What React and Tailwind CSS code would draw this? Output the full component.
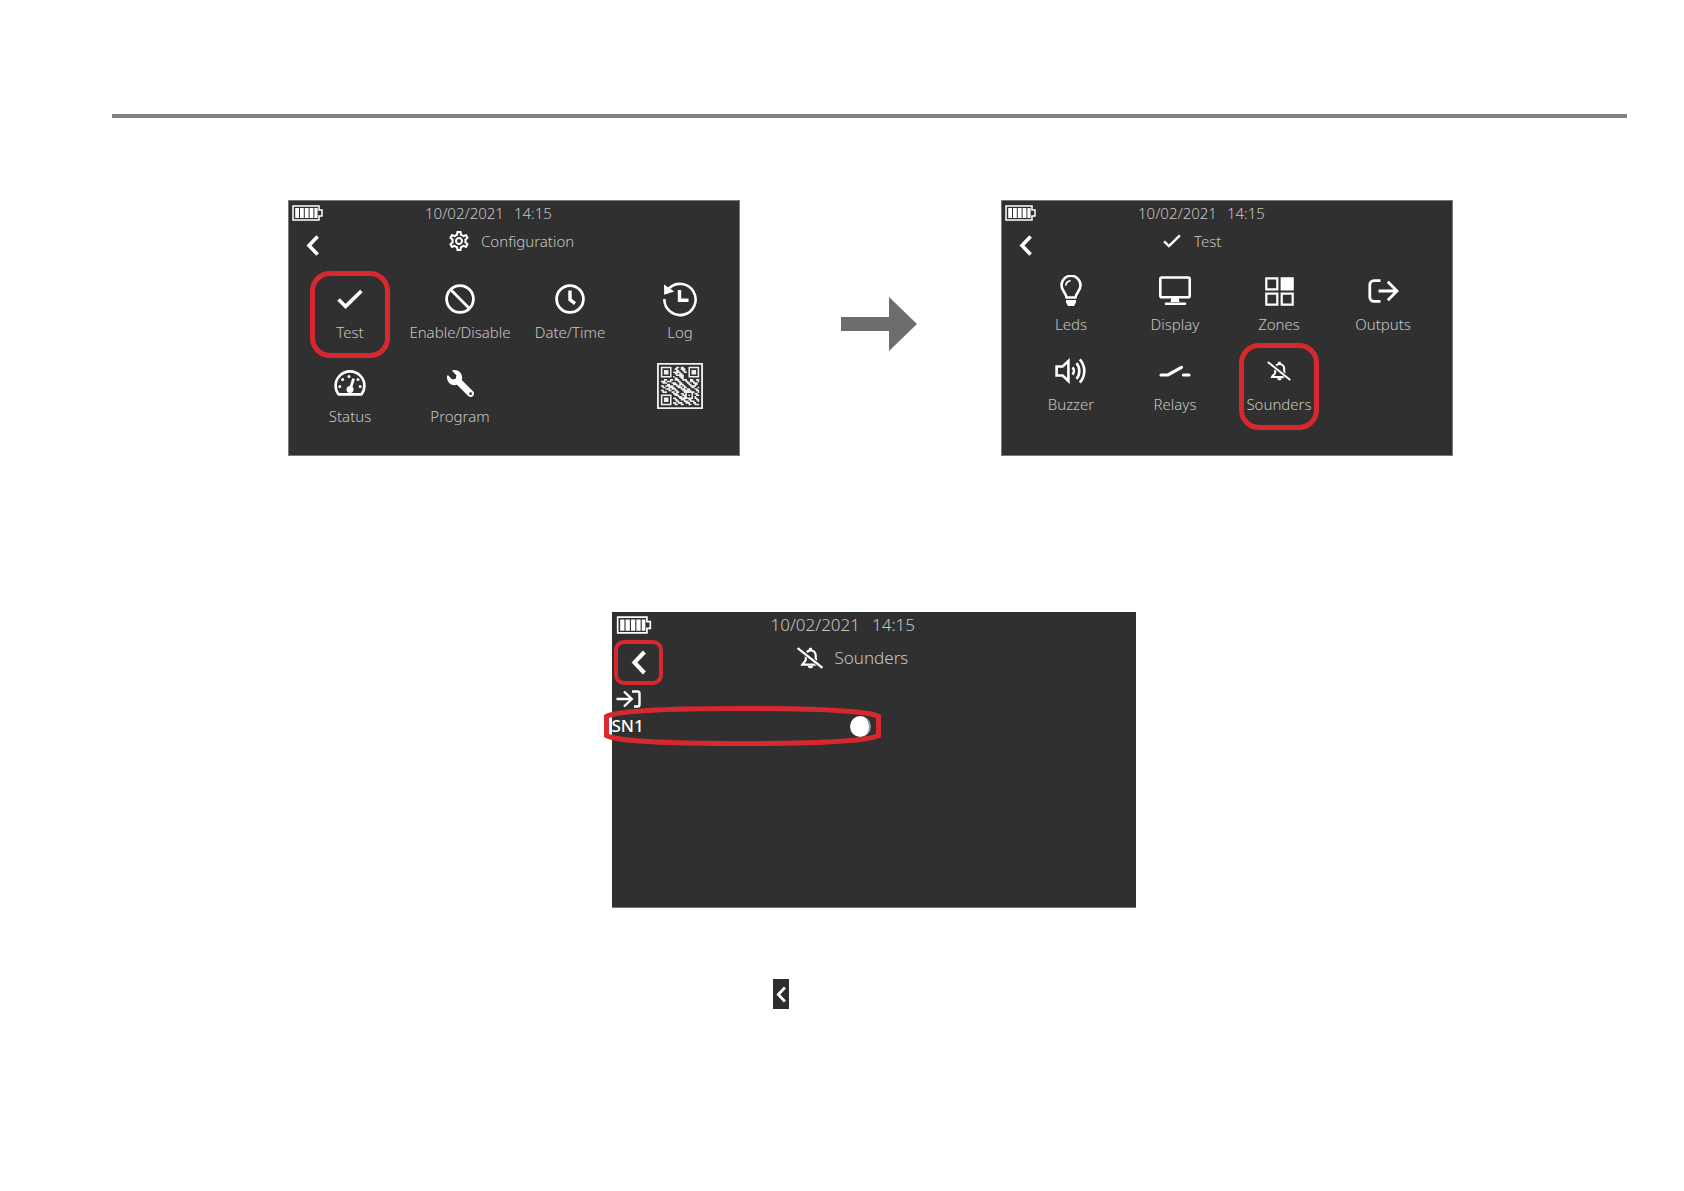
import { useState } from "react";
import clsx from "clsx";
import { FaWrench } from "react-icons/fa";
import { MdOutlineSettings } from "react-icons/md";

const BatteryIcon = ({ className }) => (
  <svg viewBox="0 0 31 16" className={className}>
    <path d="M1 1h26v4h3v6h-3v4H1z" fill="#303030" stroke="#fff" strokeWidth="1.5" />
    <path d="M3.2 3h3.8v10H3.2zM8 3h3.8v10H8zM12.8 3h3.8v10h-3.8zM17.6 3h3.8v10h-3.8zM22.4 3h3.2v10h-3.2z" fill="#fff" />
  </svg>
);

const ChevronIcon = ({ className }) => (
  <svg viewBox="0 0 13 21" fill="none" stroke="#fff" strokeWidth="3.6" className={className}>
    <path d="M11.6 1.4 3 10.5l8.6 9.1" />
  </svg>
);

const CheckIcon = ({ className }) => (
  <svg viewBox="0 0 26 20" fill="none" stroke="#fff" strokeWidth="3.6" className={className}>
    <path d="m1.6 10.4 7 7L24.4 2" />
  </svg>
);

const DisableIcon = () => (
  <svg viewBox="0 0 30 30" fill="none" stroke="#fff" strokeWidth="2.8" className="size-[30px]">
    <circle cx="15" cy="15" r="13.4" />
    <path d="m5.6 5.6 18.8 18.8" />
  </svg>
);

const ClockIcon = () => (
  <svg viewBox="0 0 30 30" fill="none" stroke="#fff" strokeWidth="2.8" className="size-[30px]">
    <circle cx="15" cy="15" r="13.4" />
    <path d="M15 6.5v9.2l5 4" strokeWidth="3.4" />
  </svg>
);

const LogIcon = () => (
  <svg viewBox="0 0 36 36" fill="none" stroke="#fff" strokeWidth="2.6" className="size-9">
    <path d="M2.4 18A15.6 15.6 0 1 0 7 7.4" />
    <path d="m2 3.5.2 10.2 10-3.2z" fill="#fff" stroke="none" />
    <path d="M17.5 9v10.2h9" strokeWidth="3.4" />
  </svg>
);

const GaugeIcon = () => (
  <svg viewBox="0 0 32 26" fill="none" stroke="#fff" className="h-[26px] w-8">
    <path d="M4.6 24.4C2.6 22 1.6 19 1.6 15.8a14.4 14.4 0 0 1 28.8 0c0 3.2-1 6.2-3 8.6z" strokeWidth="2.6" strokeLinejoin="round" />
    <path d="m19.6 8.6-3.2 10" strokeWidth="2.8" />
    <circle cx="16" cy="19.6" r="3.5" fill="#fff" stroke="none" />
    <g fill="#fff" stroke="none">
      <circle cx="5.8" cy="16.4" r="1.5" />
      <circle cx="8.6" cy="9.6" r="1.5" />
      <circle cx="15" cy="6.4" r="1.5" />
      <circle cx="24" cy="9.6" r="1.5" />
      <circle cx="26.2" cy="16.4" r="1.5" />
    </g>
  </svg>
);

const BulbIcon = () => (
  <svg viewBox="0 0 22 32" fill="none" stroke="#fff" className="h-8 w-[22px]">
    <path d="M6.4 22.5c0-4.5-4.9-6.5-4.9-12.2a9.5 9.5 0 0 1 19 0c0 5.7-4.9 7.7-4.9 12.2z" strokeWidth="2.6" strokeLinejoin="round" />
    <path d="M5.8 10.8A5.6 5.6 0 0 1 10.6 5.6" strokeWidth="1.6" />
    <path d="M6 25h10v2.2l-2 3.8H8l-2-3.8z" fill="#fff" stroke="none" />
  </svg>
);

const DisplayIcon = () => (
  <svg viewBox="0 0 32 30" fill="none" stroke="#fff" className="h-[30px] w-8">
    <rect x="1.3" y="1.5" width="29.4" height="19.8" rx="1.5" strokeWidth="2.6" />
    <path d="M12.5 21.5h7l1 4.5h-9z" fill="#fff" stroke="none" />
    <path d="M7 27.7h19" strokeWidth="2.6" strokeLinecap="round" />
  </svg>
);

const ZonesIcon = () => (
  <svg viewBox="0 0 29 29" fill="none" stroke="#fff" strokeWidth="2.2" className="size-[29px]">
    <path d="M1.3 1.3h11v11h-11zM1.3 16.7h11v11h-11zM16.7 16.7h11v11h-11z" />
    <path d="M16.7 1.3h11v11h-11z" fill="#fff" />
  </svg>
);

const OutputsIcon = () => (
  <svg viewBox="0 0 31 24" fill="none" stroke="#fff" strokeWidth="2.8" className="h-6 w-[31px]">
    <path d="M12.5 1.600H6A4.200 4.200 0 0 0 1.800 5.800v12.400A4.200 4.200 0 0 0 6 22.400h6.500" />
    <path d="M10.500 12h18M19.800 2.800 29 12l-9.200 9.200" />
  </svg>
);

const InputsIcon = () => (
  <svg viewBox="0 0 25 18" fill="none" stroke="#fff" strokeWidth="2.4" className="h-[18px] w-[25px]">
    <path d="M16 1.500h5.500a2 2 0 0 1 2 2v11a2 2 0 0 1-2 2H18" />
    <path d="M.5 9h15.500M8 1.500 15.800 9 8 16.500" />
  </svg>
);

const BuzzerIcon = () => (
  <svg viewBox="0 0 32 26" fill="none" stroke="#fff" strokeWidth="2.6" className="h-[26px] w-8">
    <path d="M1.600 8.500h6L13.400 3v20l-5.800-5.500h-6z" />
    <path d="M17.500 9.400c1.800 2 1.800 5.200 0 7.200M21.500 5.200c3.800 4.400 3.800 11.200 0 15.600M24.800 1.400c6 6.800 6 16.400 0 23.200" />
  </svg>
);

const RelayIcon = () => (
  <svg viewBox="0 0 32 12" fill="none" stroke="#fff" strokeWidth="3.2" strokeLinecap="round" className="h-3 w-8">
    <path d="M2 10h7L22.500 2.400M24.500 10H30" />
  </svg>
);

const BellOffIcon = ({ className }) => (
  <svg viewBox="0 0 26 22" fill="none" stroke="#fff" strokeWidth="2.2" className={className}>
    <path d="M8.800 9.500v3.300c0 1.700-2.500 2.600-3.600 4.900h13.600" />
    <path d="M9.800 5.200C10.800 4 12 3.300 13.500 3.300c3 0 5.200 2.300 5.200 5.300v2.900c0 .8.400 1.500 1 2.200" />
    <path d="M13.500.8v2.500" strokeWidth="3" />
    <path d="M10.800 19h5.400c-.3 1.500-1.300 2.300-2.700 2.300s-2.400-.8-2.700-2.300z" fill="#fff" stroke="none" />
    <path d="m1 1.200 24 19" stroke="#303030" strokeWidth="4" />
    <path d="m.6 1 24.800 19.800" />
  </svg>
);

const qrRows = [
  "1111111000110110001111111",
  "1000001001100111001000001",
  "1011101000110011001011101",
  "1011101011111001101011101",
  "1011101001101100001011101",
  "1000001000111110001000001",
  "1111111010001110001111111",
  "0000000001100110000000000",
  "0011001101110011100110011",
  "1110111000011000110111001",
  "0111000111001100011001110",
  "0000110011101110001100110",
  "1101111100111011000111100",
  "0110011110011101100011001",
  "0001110111000111011000110",
  "1100011001100011111100011",
  "0111000110110001111111001",
  "0000000011100110100010110",
  "1111111001110011101010011",
  "1000001000011101100010100",
  "1011101011001111111110110",
  "1011101001100111001100011",
  "1011101000110001110111001",
  "1000001011011100111001100",
  "1111111001100110001100111",
];

const qrPath = qrRows
  .flatMap((row, y) => [...row.matchAll(/1+/g)].map((run) => `M${run.index} ${y}h${run[0].length}v1h-${run[0].length}z`))
  .join("");

const QrIcon = () => (
  <svg viewBox="0 0 30 30" fill="#f0f0f0" className="size-[46px]">
    <path d="M.6.600h28.800v28.800H.6z" fill="none" stroke="#f0f0f0" strokeWidth="1.200" />
    <path d={qrPath} transform="translate(2.500 2.500)" />
  </svg>
);

const configTiles = [
  { label: "Test", icon: <CheckIcon className="h-5 w-[26px]" />, marked: true },
  { label: "Enable/Disable", icon: <DisableIcon /> },
  { label: "Date/Time", icon: <ClockIcon /> },
  { label: "Log", icon: <LogIcon /> },
  { label: "Status", icon: <GaugeIcon /> },
  { label: "Program", icon: <FaWrench className="size-[27px] -scale-x-100 text-white" /> },
];

const testTiles = [
  { label: "Leds", icon: <BulbIcon /> },
  { label: "Display", icon: <DisplayIcon /> },
  { label: "Zones", icon: <ZonesIcon /> },
  { label: "Outputs", icon: <OutputsIcon /> },
  { label: "Buzzer", icon: <BuzzerIcon /> },
  { label: "Relays", icon: <RelayIcon /> },
  { label: "Sounders", icon: <BellOffIcon className="h-5 w-6" />, marked: true },
];

function Tile({ label, icon, marked }) {
  return (
    <button type="button" className="relative flex flex-col items-center">
      <span className="flex h-12 items-center justify-center">{icon}</span>
      <span className="leading-[18px]">{label}</span>
      {marked && (
        <span className="absolute -top-1 left-1/2 h-[87px] w-20 -translate-x-1/2 rounded-[20px] border-5 border-[#d8282f]" />
      )}
    </button>
  );
}

function Screen({ title, icon, children }) {
  return (
    <section className="w-[452px] border border-[#7a7a7a] bg-[#303030] pb-[30px] text-[15px] text-[#c6c6c6]">
      <div className="flex h-6 items-center">
        <div className="w-[136px] pl-[3px]">
          <BatteryIcon className="h-4 w-[31px]" />
        </div>
        <div className="flex gap-2.5">
          <span>10/02/2021</span>
          <span>14:15</span>
        </div>
      </div>
      <div className="flex h-10 items-center">
        <div className="w-[160px] pl-[17px]">
          <button type="button" aria-label="Back" className="block">
            <ChevronIcon className="h-[21px] w-[13px]" />
          </button>
        </div>
        <div className="flex items-center gap-3 pb-2">
          <span className="flex w-5 justify-center">{icon}</span>
          <h2>{title}</h2>
        </div>
      </div>
      {children}
    </section>
  );
}

function SoundersScreen() {
  const [active, setActive] = useState(false);

  return (
    <section className="h-[296px] w-[524px] border-b border-[#7a7a7a] bg-[#303030] text-[17px] text-[#c6c6c6]">
      <div className="flex h-[26px] items-center">
        <div className="w-[159px] pl-1">
          <BatteryIcon className="h-[18px] w-9" />
        </div>
        <div className="flex gap-3">
          <span>10/02/2021</span>
          <span>14:15</span>
        </div>
      </div>
      <div className="flex h-12 items-center">
        <div className="w-[185px] pl-0.5">
          <button
            type="button"
            aria-label="Back"
            className="flex h-[45px] w-[49px] items-center justify-center rounded-[10px] border-4 border-[#d8282f]"
          >
            <ChevronIcon className="h-[25px] w-[15px]" />
          </button>
        </div>
        <div className="flex items-center gap-3 pb-2">
          <BellOffIcon className="h-[22px] w-[26px]" />
          <h2>Sounders</h2>
        </div>
      </div>
      <div className="flex h-[26px] items-center pl-1">
        <InputsIcon />
      </div>
      <div className="relative flex h-7 w-[259px] items-center justify-between">
        <label htmlFor="sn1" className="font-medium text-white">
          SN1
        </label>
        <input
          id="sn1"
          type="checkbox"
          checked={active}
          onChange={() => setActive(!active)}
          className={clsx(
            "size-[21px] appearance-none rounded-full border-r-2 border-[#9a9a9a]",
            active ? "bg-green-400" : "bg-white"
          )}
        />
        <svg
          viewBox="0 0 277 40"
          fill="none"
          stroke="#d8282f"
          strokeWidth="5"
          className="pointer-events-none absolute -top-1.5 -left-2 h-10 w-[277px]"
        >
          <path d="M2.500 10.500C14 4 70 2.500 138 2.500S262 4 274.500 10.500v19C262 36 206 37.500 138 37.500S14 36 2.500 29.500z" />
        </svg>
      </div>
    </section>
  );
}

export default function App() {
  return (
    <main className="min-h-screen bg-white pt-[114px] pr-[57px] pl-28 font-['Noto_Sans','Open_Sans',sans-serif] font-light">
      <hr className="border-t-4 border-[#808080]" />

      <div className="mt-[82px] flex items-start justify-center pl-0.5">
        <Screen title="Configuration" icon={<MdOutlineSettings className="size-6 shrink-0 text-white" />}>
          <div className="grid grid-cols-4 gap-y-[18px] pt-2.5 pr-1 pl-1.5">
            {configTiles.map((tile) => (
              <Tile key={tile.label} {...tile} />
            ))}
            <button type="button" aria-label="QR code" className="col-start-4 flex justify-center pt-1">
              <QrIcon />
            </button>
          </div>
        </Screen>

        <svg viewBox="0 0 76 54" fill="#6b6d6e" className="mt-[97px] mr-[84px] ml-[101px] h-[54px] w-[76px] shrink-0">
          <path d="M0 20h48V0l28 27-28 27V34H0z" />
        </svg>

        <Screen title="Test" icon={<CheckIcon className="h-[14px] w-[18px]" />}>
          <div className="grid grid-cols-4 gap-y-[14px] px-[17px] pt-0.5 pb-3">
            {testTiles.map((tile) => (
              <Tile key={tile.label} {...tile} />
            ))}
          </div>
        </Screen>
      </div>

      <div className="mt-[156px] flex flex-col items-center pl-2">
        <SoundersScreen />
        <button
          type="button"
          aria-label="Back"
          className="mt-[71px] mr-[186px] flex h-[30px] w-4 items-center justify-center bg-[#2b2f30]"
        >
          <ChevronIcon className="h-[17px] w-[10px]" />
        </button>
      </div>
    </main>
  );
}
